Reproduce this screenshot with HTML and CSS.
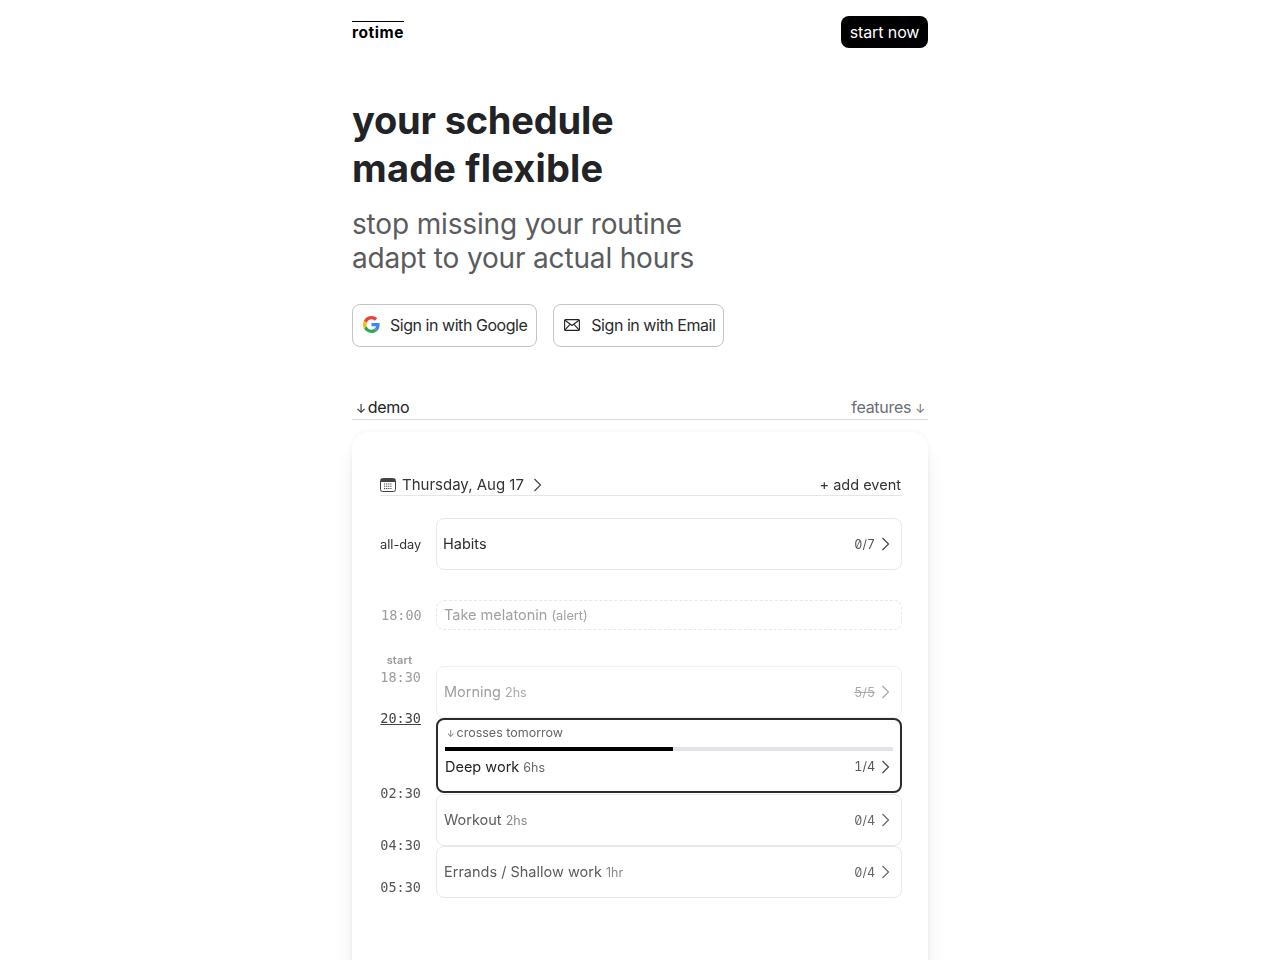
FILE: index.html
```html
<!DOCTYPE html>
<html lang="en">
<head>
    <meta charset="UTF-8">
    <meta name="viewport" content="width=device-width, initial-scale=1.0">
    <title>rotime</title>
    <link rel="stylesheet" href="styles.css">
</head>
<body>
    <div class="page">
        <header class="top">
            <a class="logo">rotime</a>
            <button class="start">start now</button>
        </header>

        <h1 class="title"><span class="line-one">your schedule</span><br><span class="line-two">made flexible</span></h1>
        <p class="sub">stop missing your routine<br>adapt to your actual hours</p>

        <div class="signin">
            <button class="signin-btn google">
                <svg width="17" height="17" viewBox="0 0 48 48">
                    <path fill="#EA4335" d="M24 9.500c3.500 0 6.700 1.200 9.200 3.600l6.900-6.900C35.900 2.400 30.500 0 24 0 14.600 0 6.500 5.400 2.600 13.200l8 6.200C12.500 13.600 17.800 9.500 24 9.500z"/>
                    <path fill="#4285F4" d="M47 24.500c0-1.600-.1-3.100-.4-4.500H24v9h12.900c-.6 3-2.200 5.500-4.700 7.200l7.700 6C44.400 38 47 31.800 47 24.500z"/>
                    <path fill="#FBBC05" d="M10.500 28.600c-.5-1.400-.8-3-.8-4.600s.3-3.200.8-4.600l-8-6.200C.9 16.500 0 20.100 0 24s.9 7.500 2.600 10.800l7.900-6.200z"/>
                    <path fill="#34A853" d="M24 48c6.500 0 11.900-2.100 15.900-5.800l-7.700-6c-2.200 1.500-4.900 2.300-8.200 2.300-6.200 0-11.500-4.100-13.400-9.900l-8 6.200C6.500 42.600 14.600 48 24 48z"/>
                </svg>
                Sign in with Google
            </button>
            <button class="signin-btn email">
                <svg width="16" height="12" viewBox="0 0 16 12" fill="none" stroke="#222" stroke-width="1.1">
                    <rect x="0.6" y="0.6" width="14.8" height="10.8" rx="1"/>
                    <path d="M1 1.200l7 5.300 7-5.300M1 10.800l5-5.500M15 10.800l-5-5.500"/>
                </svg>
                Sign in with Email
            </button>
        </div>

        <div class="tabs">
            <span class="tab"><span class="arrow">↓</span>demo</span>
            <span class="tab muted">features <span class="arrow">↓</span></span>
        </div>

        <section class="demo">
            <div class="demo-head">
                <div class="date">
                    <svg width="16" height="14" viewBox="0 0 16 14" fill="none" stroke="#444">
                        <rect x="0.5" y="0.5" width="15" height="13" rx="2"/>
                        <path d="M1 2.500h14" stroke-width="3"/>
                        <path d="M4 6h8M4 8.250h8M4 10.500h8" stroke-width="1.200" stroke-dasharray="1.200 0.900"/>
                    </svg>
                    <span>Thursday, Aug 17</span>
                    <svg class="chev" width="9" height="14" viewBox="0 0 9 14"><path d="M1.500 1l6 6-6 6"/></svg>
                </div>
                <span class="add">+ add event</span>
            </div>

            <div class="row allday">
                <span class="allday-label">all-day</span>
                <div class="event habits">
                    <span class="name">Habits</span>
                    <span class="count">0/7</span>
                    <svg class="chev" width="9" height="14" viewBox="0 0 9 14"><path d="M1.500 1l6 6-6 6"/></svg>
                </div>
            </div>

            <div class="row alert-row">
                <span class="time faded">18:00</span>
                <div class="alert"><span class="name">Take melatonin</span> <small>(alert)</small></div>
            </div>

            <div class="row plan">
                <div class="times">
                    <span class="start-label">start</span>
                    <span class="time faded">18:30</span>
                    <span class="time now">20:30</span>
                    <span class="time t-deep">02:30</span>
                    <span class="time t-workout">04:30</span>
                    <span class="time t-errands">05:30</span>
                </div>
                <div class="events">
                    <div class="event block done">
                        <span class="name">Morning <small>2hs</small></span>
                        <span class="count"><s>5/5</s></span>
                        <svg class="chev" width="9" height="14" viewBox="0 0 9 14"><path d="M1.500 1l6 6-6 6"/></svg>
                    </div>
                    <div class="current">
                        <div class="crosses"><span class="arrow">↓</span>crosses tomorrow</div>
                        <div class="bar"><div class="fill" style="width: 51%"></div></div>
                        <div class="current-row">
                            <span class="name">Deep work <small>6hs</small></span>
                            <span class="count">1/4</span>
                            <svg class="chev" width="9" height="14" viewBox="0 0 9 14"><path d="M1.500 1l6 6-6 6"/></svg>
                        </div>
                    </div>
                    <div class="event block next after-current">
                        <span class="name">Workout <small>2hs</small></span>
                        <span class="count">0/4</span>
                        <svg class="chev" width="9" height="14" viewBox="0 0 9 14"><path d="M1.500 1l6 6-6 6"/></svg>
                    </div>
                    <div class="event block next">
                        <span class="name">Errands / Shallow work <small>1hr</small></span>
                        <span class="count">0/4</span>
                        <svg class="chev" width="9" height="14" viewBox="0 0 9 14"><path d="M1.500 1l6 6-6 6"/></svg>
                    </div>
                </div>
            </div>
        </section>
    </div>
</body>
</html>
```

FILE: styles.css
```css
html, body {
    height: 100%;
    overflow: hidden;
}

body {
    margin: 0;
    background-color: #fff;
    font-family: Inter, "Liberation Sans", sans-serif;
    color: #212326;
}

.page {
    width: 576px;
    margin: 0 auto;
}

button {
    font-family: inherit;
    cursor: pointer;
}

.top {
    display: flex;
    justify-content: space-between;
    align-items: flex-start;
    padding-top: 16px;
}

.logo {
    margin-top: 5px;
    border-top: 1px solid #000;
    font-size: 15.5px;
    font-weight: 700;
    line-height: 22px;
    letter-spacing: 0.55px;
    color: #000;
}

.start {
    width: 87px;
    height: 32px;
    padding: 0;
    border: none;
    border-radius: 8px;
    background-color: #000;
    color: #fff;
    font-size: 16px;
    letter-spacing: -0.1px;
}

.title {
    margin: 48px 0 0;
    font-size: 38px;
    font-weight: 700;
    line-height: 48px;
    font-variant-ligatures: none;
}

.line-one {
    letter-spacing: -0.2px;
}

.line-two {
    letter-spacing: 0.2px;
}

.sub {
    margin: 15px 0 0;
    font-size: 28px;
    line-height: 34px;
    letter-spacing: -0.16px;
    color: #5a5b5e;
}

.signin {
    display: flex;
    gap: 16px;
    margin-top: 29px;
}

.signin-btn {
    display: flex;
    align-items: center;
    height: 43px;
    padding: 0 9px 2px 10px;
    border: 1px solid #c4c4c7;
    border-radius: 8px;
    background-color: #fff;
    color: #2a2b2e;
    font-size: 16px;
    letter-spacing: -0.46px;
}

.google svg {
    margin-right: 10px;
}

.email {
    padding-right: 8px;
}

.email svg {
    margin-right: 11px;
}

.tabs {
    display: flex;
    justify-content: space-between;
    margin-top: 48px;
    padding: 0 3px 0 4px;
    height: 24px;
    border-bottom: 1px solid #dcdcde;
    font-size: 16px;
    line-height: 24px;
    letter-spacing: -0.3px;
}

.arrow {
    font-size: 12px;
    margin-right: 2px;
}

.muted {
    color: #6d6e72;
}

.muted .arrow {
    margin: 0;
}

.demo {
    height: 560px;
    margin-top: 12px;
    padding: 40px 26px 0 28px;
    border-radius: 16px;
    background-color: #fff;
    box-shadow: 0 20px 25px -5px rgba(0, 0, 0, 0.1), 0 8px 10px -6px rgba(0, 0, 0, 0.1), 0 0 6px rgba(0, 0, 0, 0.05);
}

/* the demo is a soft, scaled down picture in the original */
.demo > * {
    filter: blur(0.4px);
}

.demo-head {
    display: flex;
    justify-content: space-between;
    align-items: center;
    height: 24px;
    box-sizing: border-box;
    padding-top: 2px;
    border-bottom: 1px solid #e6e6e8;
    font-size: 15px;
    color: #333;
}

.add {
    margin-right: 1px;
    font-size: 14.5px;
}

.date {
    display: flex;
    align-items: center;
    gap: 6px;
}

.date .chev {
    margin-left: 3px;
}

.chev {
    flex: none;
    fill: none;
    stroke: #444;
    stroke-width: 1.2;
}

.row {
    display: flex;
    align-items: center;
}

.allday {
    margin-top: 22px;
}

.allday-label {
    width: 56px;
    font-size: 12.8px;
    color: #333;
}

.event {
    display: flex;
    align-items: center;
    flex: 1;
    height: 52px;
    box-sizing: border-box;
    padding: 0 11px 0 7px;
    border: 1px solid #e8e8ea;
    border-radius: 8px;
    font-size: 14.5px;
}

.name {
    flex: 1;
}

.event .name {
    margin-bottom: 2px;
}

.name small {
    font-size: 12.5px;
    color: #888;
}

.habits {
    padding-left: 6px;
    color: #2c2c2e;
}

.count {
    margin-right: 6px;
    font-size: 12.5px;
    font-feature-settings: "zero", "tnum";
    color: #555;
}

.alert-row {
    margin-top: 30px;
}

.time {
    font-family: "DejaVu Sans Mono", monospace;
    font-size: 13.5px;
    color: #555;
}

.alert-row .time {
    width: 56px;
    padding-left: 1px;
    box-sizing: border-box;
}

.faded {
    color: #9c9c9e;
}

.alert {
    flex: 1;
    height: 30px;
    box-sizing: border-box;
    padding-left: 7px;
    border: 1px dashed #e8e8ea;
    border-radius: 8px;
    font-size: 14.5px;
    line-height: 28px;
    color: #a0a0a3;
}

.alert small {
    font-size: 12.8px;
}

.plan {
    align-items: flex-start;
    margin-top: 36px;
}

.times {
    display: flex;
    flex-direction: column;
    align-items: flex-end;
    width: 41px;
    margin-right: 15px;
    margin-top: -12px;
}

.start-label {
    align-self: flex-start;
    width: 39px;
    font-size: 11px;
    font-weight: 600;
    line-height: 12px;
    letter-spacing: 0.2px;
    text-align: center;
    color: #999;
}

.times .time {
    line-height: 18px;
}

.times .faded {
    margin-top: 2px;
}

.now {
    margin-top: 23px;
    text-decoration: underline;
    color: #444;
}

.t-deep {
    margin-top: 57px;
}

.t-workout {
    margin-top: 34px;
}

.t-errands {
    margin-top: 24px;
}

.events {
    flex: 1;
}

.done {
    color: #a0a0a3;
    border-color: #f0f0f1;
}

.done .name small,
.done .count {
    color: #aaa;
}

.done .chev {
    stroke: #aaa;
}

.next {
    color: #5c5c5f;
}

.next .count {
    color: #666;
}

.next .chev {
    stroke: #666;
}

.after-current {
    margin-top: 1px;
}

.current {
    height: 75px;
    box-sizing: border-box;
    padding: 5px 7px 0;
    border: 2px solid #2a2b2e;
    border-radius: 8px;
}

.crosses {
    padding-left: 2px;
    font-size: 12.5px;
    line-height: 16px;
    color: #666;
}

.crosses .arrow {
    font-size: 9px;
}

.bar {
    height: 4px;
    margin-top: 5px;
    background-color: #e2e3e8;
}

.fill {
    height: 100%;
    background-color: #000;
}

.current-row {
    display: flex;
    align-items: center;
    margin-top: 7px;
    padding-right: 3px;
    font-size: 14.5px;
}

.current-row .name small {
    color: #666;
}
```
